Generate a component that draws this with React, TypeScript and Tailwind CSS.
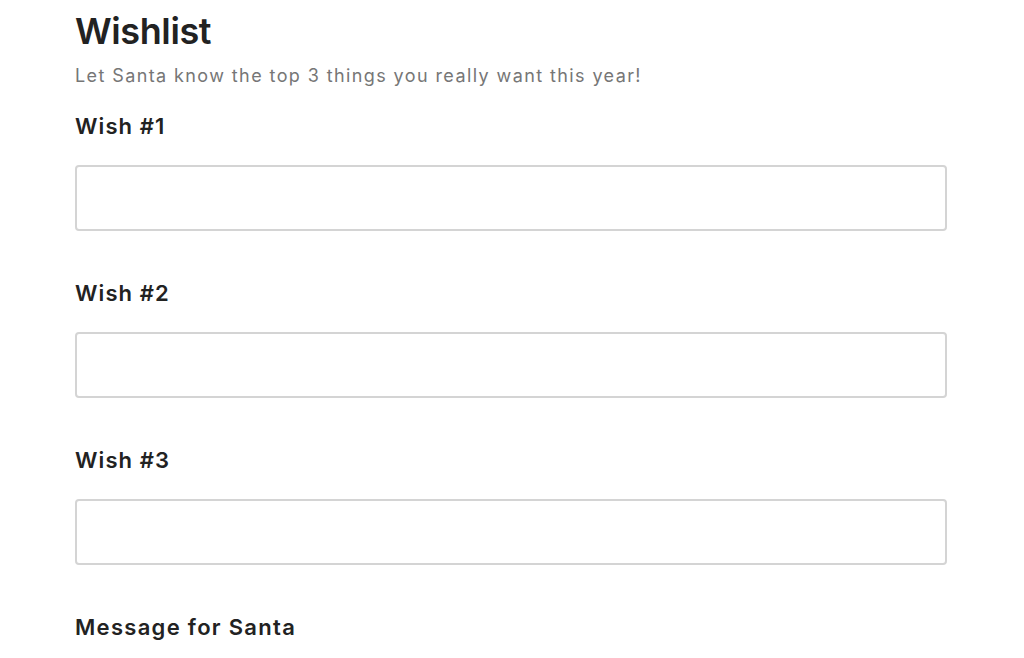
import React from 'react';

const wishes = ['Wish #1', 'Wish #2', 'Wish #3'];

const App: React.FC = () => {
  return (
    <div className="min-h-screen w-full bg-white font-['Inter',sans-serif] text-[#222]">
      <div className="pl-[75px] pr-[77px] pt-[9px]">
        <h1 className="text-[36px] leading-[44px] font-semibold tracking-[-0.4px]">Wishlist</h1>
        <p className="mt-[10px] text-[18px] leading-[26px] text-[#767676] tracking-[1.4px]">
          Let Santa know the top 3 things you really want this year!
        </p>

        <div className="mt-[23px] flex flex-col gap-[48px]">
          {wishes.map((label) => (
            <div key={label} className="flex flex-col gap-[25px]">
              <label className="text-[22px] leading-[28px] font-semibold tracking-[1.1px]">{label}</label>
              <input
                type="text"
                className="h-[66px] w-full rounded-[4px] border-2 border-[#d4d4d4] bg-white px-4 outline-none"
              />
            </div>
          ))}
          <label className="text-[22px] leading-[28px] font-semibold tracking-[1.3px]">Message for Santa</label>
        </div>
      </div>
    </div>
  );
};

export default App;
